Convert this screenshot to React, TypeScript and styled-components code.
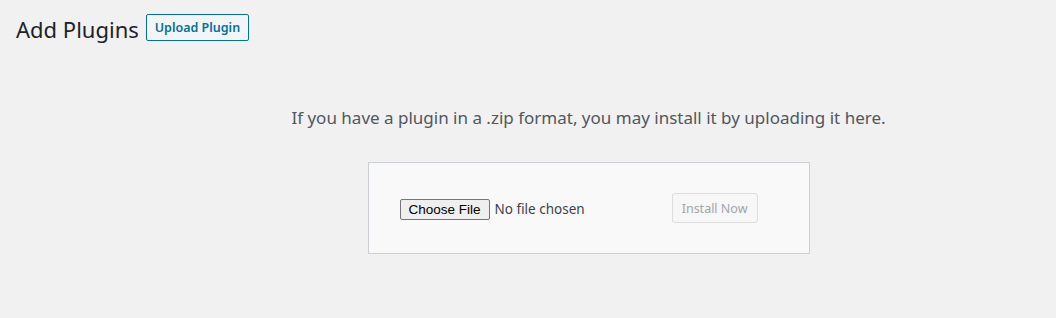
import React from "react";
import styled, { createGlobalStyle } from "styled-components";

const Global = createGlobalStyle`
  html, body { margin: 0; padding: 0; background: #f1f1f1; }
  body { font-family: "Noto Sans", "Open Sans", sans-serif; color: #3c434a; }
`;

const Wrap = styled.div`
  padding: 10px 20px 0 16px;
`;

const TitleRow = styled.div`
  display: flex;
  align-items: center;
  height: 42px;
  gap: 7px;
`;

const Title = styled.h1`
  margin: 0;
  font-size: 22px;
  font-weight: 400;
  color: #1d2327;
  line-height: 30px;
  position: relative;
  top: -2px;
`;

const TitleAction = styled.a`
  display: inline-flex;
  align-items: center;
  box-sizing: border-box;
  height: 27px;
  padding: 0 8px;
  border: 1px solid #0071a1;
  border-radius: 2px;
  background: #f3f5f6;
  color: #0071a1;
  font-size: 12.5px;
  font-weight: 600;
  text-decoration: none;
  position: relative;
  top: -4px;
`;

const UploadArea = styled.div`
  padding-left: 125px;
  display: flex;
  flex-direction: column;
  align-items: center;
`;

const Help = styled.p`
  margin: 54px 0 0;
  font-size: 17px;
  line-height: 24px;
  color: #50575e;
  text-align: center;
`;

const Form = styled.form`
  box-sizing: border-box;
  width: 442px;
  height: 92px;
  margin-top: 32px;
  padding: 2px 30px 0 31px;
  background: #f9f9f9;
  border: 1px solid #ccd0d4;
  display: flex;
  align-items: center;
  justify-content: space-between;
`;

const FilePick = styled.label`
  display: flex;
  align-items: center;
  gap: 5px;
  font-size: 13.5px;
  color: #3c434a;
`;

const NativeButton = styled.span`
  display: inline-flex;
  align-items: center;
  box-sizing: border-box;
  height: 21px;
  padding: 0 8px;
  background: #efefef;
  border: 1px solid #767676;
  border-radius: 2px;
  font-family: "Liberation Sans", Arial, sans-serif;
  font-size: 13.5px;
  color: #000;
`;

const HiddenInput = styled.input`
  display: none;
`;

const InstallButton = styled.button`
  box-sizing: border-box;
  height: 30px;
  padding: 0 9px;
  margin-right: 21px;
  margin-top: -2px;
  background: #f7f7f7;
  border: 1px solid #dddddd;
  border-radius: 3px;
  color: #a0a5aa;
  font-family: "Noto Sans", "Open Sans", sans-serif;
  font-size: 12.5px;
`;

export default function App() {
  return (
    <>
      <Global />
      <Wrap>
        <TitleRow>
          <Title>Add Plugins</Title>
          <TitleAction href="#">Upload Plugin</TitleAction>
        </TitleRow>
        <UploadArea>
          <Help>If you have a plugin in a .zip format, you may install it by uploading it here.</Help>
          <Form onSubmit={(e) => e.preventDefault()}>
            <FilePick>
              <HiddenInput type="file" name="pluginzip" accept=".zip" />
              <NativeButton>Choose File</NativeButton>
              No file chosen
            </FilePick>
            <InstallButton type="submit" disabled>Install Now</InstallButton>
          </Form>
        </UploadArea>
      </Wrap>
    </>
  );
}
